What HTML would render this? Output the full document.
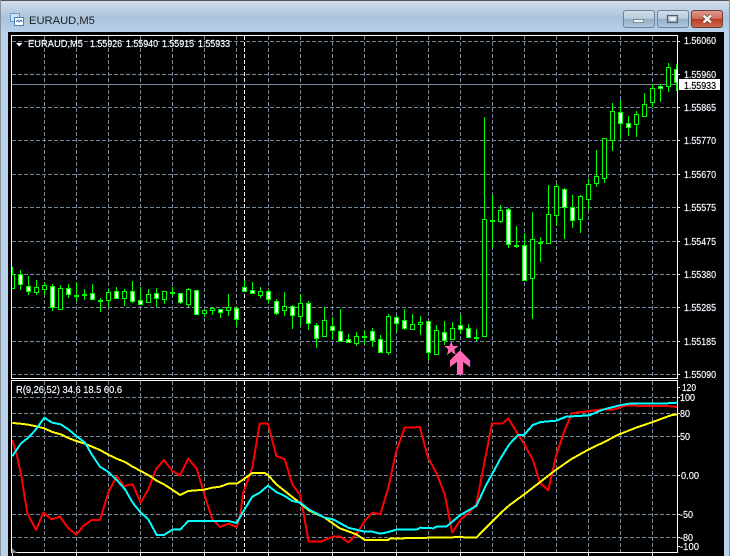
<!DOCTYPE html>
<html><head><meta charset="utf-8"><style>
html,body{margin:0;padding:0;background:#b9d1ea;width:730px;height:556px;overflow:hidden}
svg{display:block}
text{font-family:"Liberation Sans",sans-serif;font-size:10.5px;fill:#fff;stroke:#e8f0ff;stroke-width:.2px}
</style></head><body>
<svg width="730" height="556" viewBox="0 0 730 556" xmlns="http://www.w3.org/2000/svg">
<defs>
<linearGradient id="t" x1="0" y1="0" x2="0" y2="1"><stop offset="0" stop-color="#d2dfec"/><stop offset=".55" stop-color="#a9c3dc"/><stop offset="1" stop-color="#b9d1ea"/></linearGradient>
<linearGradient id="b" x1="0" y1="0" x2="0" y2="1"><stop offset="0" stop-color="#d6e0ea"/><stop offset=".48" stop-color="#b8cadc"/><stop offset=".5" stop-color="#95adc6"/><stop offset="1" stop-color="#b3cadf"/></linearGradient>
<linearGradient id="c" x1="0" y1="0" x2="0" y2="1"><stop offset="0" stop-color="#dc9a8c"/><stop offset=".48" stop-color="#cf6f5c"/><stop offset=".5" stop-color="#b83a22"/><stop offset="1" stop-color="#cf6a50"/></linearGradient>
<clipPath id="m"><rect x="12" y="36" width="665" height="342"/></clipPath>
<clipPath id="s"><rect x="12" y="381" width="665" height="171"/></clipPath>
</defs>
<rect width="730" height="556" fill="#b9d1ea"/>
<rect x="1" y="1" width="728" height="31" fill="url(#t)"/>
<rect width="730" height="1" fill="#555"/>
<rect width="1" height="556" fill="#8a939c"/>
<rect x="729" width="1" height="556" fill="#8a939c"/>
<rect x="8" y="32" width="716" height="524" fill="#000"/>

<!-- window icon -->
<g shape-rendering="crispEdges">
<rect x="10.5" y="13.5" width="9" height="8" fill="#cfe3f5" stroke="#6f9ac4"/>
<rect x="14.5" y="17.5" width="9" height="8" fill="#fff" stroke="#4f82b8"/>
<path d="M16 22l2-2 1 2 2-2 1 2" fill="none" stroke="#3a78b8"/>
</g>
<text x="29" y="24" style="font-size:11.2px;fill:#1e1e1e;stroke:none">EURAUD,M5</text>

<!-- window buttons -->
<rect x="623.5" y="10.5" width="31" height="17" rx="2.5" fill="url(#b)" stroke="#6f8296"/>
<rect x="657.5" y="10.5" width="31" height="17" rx="2.5" fill="url(#b)" stroke="#6f8296"/>
<rect x="691.5" y="10.5" width="31" height="17" rx="2.5" fill="url(#c)" stroke="#6f4038"/>
<rect x="633.5" y="19.5" width="10" height="3" fill="#f2f5f8" stroke="#5d6f82" stroke-width=".7"/>
<rect x="667.5" y="15.5" width="10" height="7" fill="none" stroke="#4f6070" stroke-width="1.2"/>
<rect x="669.5" y="17.5" width="6" height="3" fill="#f2f5f8"/>
<path d="M703.5 15.5l7.5 7M711 15.5l-7.5 7" stroke="#4a2a24" stroke-width="3.8" fill="none"/>
<path d="M703.5 15.5l7.5 7M711 15.5l-7.5 7" stroke="#f4f0ee" stroke-width="2.6" fill="none"/>

<!-- grid -->
<g stroke="#778899" stroke-width="1" fill="none" stroke-dasharray="4 2" shape-rendering="crispEdges">
<path d="M12 41.5H677M12 74.5H677M12 107.5H677M12 140.5H677M12 174.5H677M12 207.5H677M12 241.5H677M12 274.5H677M12 307.5H677M12 341.5H677M12 374.5H677"/>
<path d="M12 397.5H677M12 413.5H677M12 436.5H677M12 475.5H677M12 514.5H677M12 537.5H677"/>
<path d="M44.5 36V378M76.5 36V378M108.5 36V378M140.5 36V378M172.5 36V378M204.5 36V378M236.5 36V378M268.5 36V378M300.5 36V378M332.5 36V378M364.5 36V378M396.5 36V378M428.5 36V378M460.5 36V378M492.5 36V378M524.5 36V378M556.5 36V378M588.5 36V378M620.5 36V378M652.5 36V378"/>
<path d="M44.5 381V552M76.5 381V552M108.5 381V552M140.5 381V552M172.5 381V552M204.5 381V552M236.5 381V552M268.5 381V552M300.5 381V552M332.5 381V552M364.5 381V552M396.5 381V552M428.5 381V552M460.5 381V552M492.5 381V552M524.5 381V552M556.5 381V552M588.5 381V552M620.5 381V552M652.5 381V552"/>
</g>
<path d="M244.5 36V378M244.5 381V552" stroke="#fff" stroke-dasharray="4 2" shape-rendering="crispEdges"/>
<path d="M12 84.5H677" stroke="#778899" shape-rendering="crispEdges"/>

<!-- candles -->
<g clip-path="url(#m)" shape-rendering="crispEdges">
<path fill="none" stroke="#00ff00" d="M12.5 267V288M20.5 270V290M28.5 276V295M36.5 280V295M44.5 282V295M52.5 284V311M60.5 285V310M68.5 284V298M76.5 282V301M84.5 289V300M92.5 284V300M100.5 298V312M108.5 289V307M116.5 287V299M124.5 289V306M132.5 281V303M140.5 287V305M148.5 289V303M156.5 288V307M164.5 291V304M172.5 287V296M180.5 293V304M188.5 288V307M196.5 290V315M204.5 309V317M212.5 307V315M220.5 309V318M228.5 294V316M236.5 307V327M244.5 280V291M252.5 282V293M260.5 287V298M268.5 290V303M276.5 299V315M284.5 292V316M292.5 305V329M300.5 294V326M308.5 301V330M316.5 323V348M324.5 307V336M332.5 317V339M340.5 309V341M348.5 334V343M356.5 332V346M364.5 330V345M372.5 328V347M380.5 335V352M388.5 314V355M396.5 316V332M404.5 309V330M412.5 314V330M420.5 316V335M428.5 321V360M436.5 325V354M444.5 321V345M452.5 322V340M460.5 315V334M468.5 324V338M476.5 329V341M484.5 117V337M492.5 195V248M500.5 205V223M508.5 208V248M516.5 226V248M524.5 233V280M532.5 212V319M540.5 237V262M548.5 185V243M556.5 184V226M564.5 188V239M572.5 195V228M580.5 195V233M588.5 179V210M596.5 150V187M604.5 138V183M612.5 103V151M620.5 100V139M628.5 116V136M636.5 111V137M644.5 93V117M652.5 84V107M660.5 84V102M668.5 63V92M676.5 64V91"/>
<path fill="#000" stroke="#00ff00" d="M10.5 274.5h4v14h-4zM34.5 287.5h4v5h-4zM42.5 285.5h4v4h-4zM58.5 288.5h4v21h-4zM74.5 295.5h4v1h-4zM82.5 294.5h4v1h-4zM98.5 300.5h4v1h-4zM106.5 292.5h4v8h-4zM122.5 291.5h4v7h-4zM146.5 294.5h4v8h-4zM162.5 291.5h4v8h-4zM170.5 292.5h4v1h-4zM186.5 289.5h4v15h-4zM202.5 310.5h4v3h-4zM210.5 308.5h4v2h-4zM226.5 307.5h4v3h-4zM258.5 291.5h4v4h-4zM282.5 306.5h4v4h-4zM298.5 303.5h4v13h-4zM322.5 320.5h4v16h-4zM354.5 336.5h4v7h-4zM362.5 336.5h4v1h-4zM386.5 316.5h4v36h-4zM410.5 324.5h4v5h-4zM418.5 322.5h4v2h-4zM434.5 330.5h4v24h-4zM450.5 328.5h4v11h-4zM474.5 337.5h4v1h-4zM482.5 219.5h4v117h-4zM490.5 220.5h4v1h-4zM498.5 210.5h4v11h-4zM514.5 245.5h4v1h-4zM530.5 239.5h4v39h-4zM538.5 242.5h4v1h-4zM546.5 214.5h4v29h-4zM554.5 186.5h4v29h-4zM578.5 196.5h4v23h-4zM586.5 184.5h4v15h-4zM594.5 176.5h4v7h-4zM602.5 138.5h4v40h-4zM610.5 111.5h4v29h-4zM634.5 114.5h4v10h-4zM642.5 104.5h4v12h-4zM650.5 88.5h4v14h-4zM666.5 67.5h4v19h-4z"/>
<path fill="#fff" stroke="#00ff00" d="M18.5 274.5h4v10h-4zM26.5 286.5h4v5h-4zM50.5 286.5h4v21h-4zM66.5 288.5h4v6h-4zM90.5 293.5h4v6h-4zM114.5 291.5h4v7h-4zM130.5 291.5h4v10h-4zM138.5 300.5h4v4h-4zM154.5 293.5h4v5h-4zM178.5 293.5h4v9h-4zM194.5 290.5h4v24h-4zM218.5 309.5h4v3h-4zM234.5 308.5h4v11h-4zM242.5 287.5h4v4h-4zM250.5 290.5h4v3h-4zM266.5 291.5h4v8h-4zM274.5 301.5h4v12h-4zM290.5 306.5h4v9h-4zM306.5 303.5h4v20h-4zM314.5 325.5h4v13h-4zM330.5 326.5h4v4h-4zM338.5 331.5h4v10h-4zM346.5 339.5h4v3h-4zM370.5 331.5h4v9h-4zM378.5 339.5h4v13h-4zM394.5 317.5h4v6h-4zM402.5 320.5h4v8h-4zM426.5 321.5h4v31h-4zM442.5 332.5h4v8h-4zM458.5 325.5h4v4h-4zM466.5 328.5h4v9h-4zM506.5 209.5h4v35h-4zM522.5 245.5h4v35h-4zM562.5 189.5h4v18h-4zM570.5 207.5h4v13h-4zM618.5 112.5h4v11h-4zM626.5 123.5h4v4h-4zM658.5 86.5h4v2h-4zM674.5 69.5h4v13h-4z"/>
</g>

<!-- arrow + star -->
<g shape-rendering="crispEdges">
<path d="M460 350L470.6 361V367.5L463.6 362.5V374.5H462V360Z" fill="#2a2a90"/>
<path d="M451.3 341L453 346H458.5L454.2 349.5L455.8 355L451.3 351.7L447 355L448.4 349.5L444.2 346H449.5Z" fill="#ff69b4"/>
<path d="M460 350L470 360.5V367L463 362V374.5H457V362L450 367V360.5Z" fill="#ff69b4"/>
</g>

<!-- indicator lines -->
<g clip-path="url(#s)" fill="none" stroke-width="2" stroke-linejoin="round" shape-rendering="crispEdges">
<polyline stroke="#ff0000" points="12.3,440 16.7,454.3 20.7,472.7 27.3,512.7 36,530 43.3,512.7 51.7,519.3 60,516.7 68.3,528.3 76.3,534.7 83.3,526 91.7,520 100,520 108.3,492.7 116.7,476 124,486 132.7,484.3 140.7,502.7 148.7,488.7 156,469.3 164,460 172.3,471 180,475.3 188.3,458.7 196.7,468.7 204,493.3 212.3,519.3 220,527 228.3,523.7 236.7,527 240.7,512.7 243,493.3 252.3,467.7 259.7,423.7 268,423.7 276.3,456 284.7,459.3 292.3,484.3 300.3,495.3 308.7,541.7 320.3,541.7 333,536.7 340.3,536.7 348.3,542.3 356.3,534.3 364.7,521 372.3,512.7 380.3,514.3 388.3,487.7 396.3,451 404.7,427.7 413,427.7 419.7,426.7 428,457.7 436.3,472.7 444.7,494.3 452.3,532.7 460.3,520 469.7,512 476.3,504.3 486,454.3 492,423.3 502.7,423.3 508.3,418.3 516,431 524.3,444.3 532.7,459.3 540,482.7 548.3,490.3 556,456 564.3,431 572,413.3 589.3,411 602.7,409.3 614.3,409.3 626,405.3 642.7,406 667.7,406 677,407"/>
<polyline stroke="#ffff00" points="12.3,423 20.7,423.7 28.3,424.7 36,426.3 44.3,428.3 52.3,432 60.7,434.3 68.3,438 76.3,441 85,443.7 100,450 108.3,454.7 116.7,458.7 125,462 132.7,466.7 140.7,471 148.7,475.3 156.7,480.7 164,484.3 172.3,489.7 180,495 188.3,491 204,489.7 212.3,487.7 220,486.7 228.3,483.7 236.7,483.7 243,479.7 252.3,473 264.7,473 268,475 276.3,484.3 284.7,491 300.3,503.3 308.7,510.3 324.7,517.7 339.7,528.3 356.3,534.3 364.7,540 388.3,540 389.7,538.7 413,538 453,537.3 460.3,536.7 466.3,537.7 476.3,537.7 486,527.7 501,512.7 509.3,505.3 524.3,494.3 539.3,482.7 554.3,471 571,459.3 587.7,450 602.7,442.7 619.3,434.3 636,427.7 652.7,422 671,415.3 677,414.3"/>
<polyline stroke="#00ffff" points="12.3,456.3 20.7,443.7 28.3,437.7 36,429.3 44.3,417.7 52.3,422.7 60.7,424.3 68.3,429.3 76.3,436 85,442.7 91.7,454.3 100,466.7 108.3,472 116.7,480 125,489.3 132.7,502.7 140.7,512.7 148.3,519.3 156.7,535 164,535 172.3,529.7 180,529.7 188.3,521 228.3,521 236.7,523 243,512 252.3,496.7 259.7,492.7 268,485.7 276.3,492 284.7,496 292.3,501 300.3,502.7 308.7,509.3 324.7,517.7 333,519.3 348.3,527.7 364.7,531.7 372.3,531.7 380.3,533.7 388.3,532 396.3,529.7 416.3,529.7 420.3,527.7 433,528.3 436.3,526.7 446.3,526.7 460.3,515 476.3,506 486,485.3 492,474.3 501,457.7 509.3,444.3 517.7,435.3 524.3,434.7 532.7,425 541,422 556,420.7 566,416.7 589.3,415.3 602.7,409.7 621,405 629.3,403.7 661,403.7 677,402.7"/>
</g>

<!-- frames and ticks -->
<g fill="none" stroke="#fff" shape-rendering="crispEdges">
<rect x="11.5" y="35.5" width="666" height="343"/>
<rect x="11.5" y="380.5" width="666" height="172"/>
<path d="M677 41.5h3M677 74.5h3M677 107.5h3M677 140.5h3M677 174.5h3M677 207.5h3M677 241.5h3M677 274.5h3M677 307.5h3M677 341.5h3M677 374.5h3M677 387.5h3M677 397.5h3M677 413.5h3M677 436.5h3M677 475.5h3M677 514.5h3M677 537.5h3M677 546.5h3"/>
<path d="M12.5 553v3M76.5 553v3M140.5 553v3M204.5 553v3M268.5 553v3M332.5 553v3M396.5 553v3M460.5 553v3M524.5 553v3M588.5 553v3M652.5 553v3"/>
</g>
<path d="M12 548L17 553H12Z" fill="#778899"/>

<!-- legend -->
<path d="M16 43H22.5L19.2 46.5Z" fill="#fff"/>
<text x="28" y="47" textLength="55" lengthAdjust="spacingAndGlyphs">EURAUD,M5</text>
<text x="90" y="47" textLength="32" lengthAdjust="spacingAndGlyphs">1.55926</text>
<text x="126" y="47" textLength="32" lengthAdjust="spacingAndGlyphs">1.55940</text>
<text x="162" y="47" textLength="32" lengthAdjust="spacingAndGlyphs">1.55915</text>
<text x="198" y="47" textLength="32" lengthAdjust="spacingAndGlyphs">1.55933</text>
<text x="16" y="393" textLength="106" lengthAdjust="spacingAndGlyphs">R(9,26,52) 34.6 18.5 60.6</text>

<!-- axis labels -->
<g>
<text x="684" y="44" textLength="32" lengthAdjust="spacingAndGlyphs">1.56060</text>
<text x="684" y="78" textLength="32" lengthAdjust="spacingAndGlyphs">1.55960</text>
<text x="684" y="111" textLength="32" lengthAdjust="spacingAndGlyphs">1.55865</text>
<text x="684" y="144" textLength="32" lengthAdjust="spacingAndGlyphs">1.55770</text>
<text x="684" y="178" textLength="32" lengthAdjust="spacingAndGlyphs">1.55670</text>
<text x="684" y="211" textLength="32" lengthAdjust="spacingAndGlyphs">1.55575</text>
<text x="684" y="245" textLength="32" lengthAdjust="spacingAndGlyphs">1.55475</text>
<text x="684" y="278" textLength="32" lengthAdjust="spacingAndGlyphs">1.55380</text>
<text x="684" y="311" textLength="32" lengthAdjust="spacingAndGlyphs">1.55285</text>
<text x="684" y="345" textLength="32" lengthAdjust="spacingAndGlyphs">1.55185</text>
<text x="684" y="378" textLength="32" lengthAdjust="spacingAndGlyphs">1.55090</text>
</g>
<rect x="679" y="79" width="41" height="11" fill="#fff"/>
<text x="684" y="89" textLength="32" lengthAdjust="spacingAndGlyphs" style="fill:#000;stroke:#000">1.55933</text>
<g>
<text x="682" y="391" textLength="14" lengthAdjust="spacingAndGlyphs">120</text>
<text x="680" y="401" textLength="15" lengthAdjust="spacingAndGlyphs">100</text>
<text x="680" y="417" textLength="10" lengthAdjust="spacingAndGlyphs">80</text>
<text x="680" y="440" textLength="10" lengthAdjust="spacingAndGlyphs">50</text>
<text x="681" y="479" textLength="18" lengthAdjust="spacingAndGlyphs">0.00</text>
<text x="680" y="518" textLength="13" lengthAdjust="spacingAndGlyphs">-50</text>
<text x="680" y="541" textLength="13" lengthAdjust="spacingAndGlyphs">-80</text>
<text x="680" y="550" textLength="19" lengthAdjust="spacingAndGlyphs">-100</text>
</g>
</svg>
</body></html>
